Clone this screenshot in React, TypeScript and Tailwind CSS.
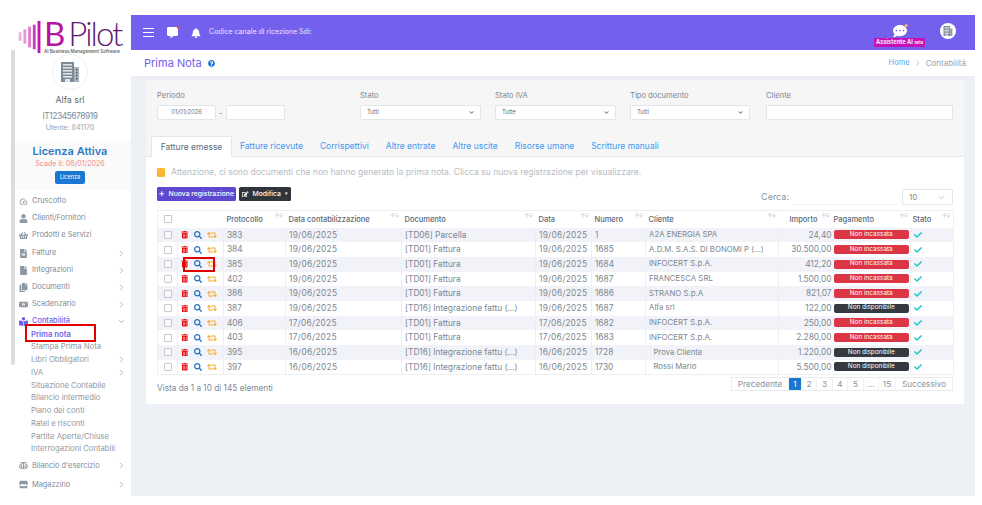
import React from "react";
import {
  FaBalanceScale, FaBookReader, FaCheck, FaChevronDown, FaCopy, FaEdit, FaFile, FaFileAlt,
  FaMoneyBillAlt, FaPlus, FaRetweet, FaSearch, FaShoppingBasket, FaStore, FaTrashAlt, FaUser, FaBell, FaCommentAlt, FaCommentDots, FaQuestionCircle,
} from "react-icons/fa";
import { FiChevronDown, FiChevronRight } from "react-icons/fi";
import { MdOutlineSpeed } from "react-icons/md";

const font = "[font-family:Inter,'Noto_Sans',sans-serif]";

type Row = [string, string, string, string, string, string, string, boolean];
const rows: Row[] = [
  ["383", "19/06/2025", "[TD06] Parcella", "19/06/2025", "1", "A2A ENERGIA SPA", "24,40", false],
  ["384", "19/06/2025", "[TD01] Fattura", "19/06/2025", "1685", "A.D.M. S.A.S. DI BONOMI P (...)", "30.500,00", false],
  ["385", "19/06/2025", "[TD01] Fattura", "19/06/2025", "1684", "INFOCERT S.p.A.", "412,20", false],
  ["402", "19/06/2025", "[TD01] Fattura", "19/06/2025", "1687", "FRANCESCA SRL", "1.500,00", false],
  ["386", "19/06/2025", "[TD01] Fattura", "19/06/2025", "1686", "STRANO S.p.A", "821,07", false],
  ["387", "19/06/2025", "[TD16] Integrazione fattu (...)", "19/06/2025", "1687", "Alfa srl", "122,00", true],
  ["406", "17/06/2025", "[TD01] Fattura", "17/06/2025", "1682", "INFOCERT S.p.A.", "250,00", false],
  ["403", "17/06/2025", "[TD01] Fattura", "17/06/2025", "1683", "INFOCERT S.p.A.", "2.280,00", false],
  ["395", "16/06/2025", "[TD16] Integrazione fattu (...)", "16/06/2025", "1728", "\u00a0\u00a0Prova Cliente", "1.220,00", true],
  ["397", "16/06/2025", "[TD16] Integrazione fattu (...)", "16/06/2025", "1730", "\u00a0\u00a0Rossi Mario", "5.500,00", true],
];

const headers: [string, string, string][] = [
  ["Protocollo", "w-[62px]", "pl-[3px]"],
  ["Data contabilizzazione", "w-[116px]", "pl-[3px]"],
  ["Documento", "w-[134px]", "pl-[3px]"],
  ["Data", "w-[56px]", "pl-[3px]"],
  ["Numero", "w-[54px]", "pl-[3px]"],
  ["Cliente", "w-[133px]", "pl-[3px]"],
  ["Importo", "w-[54px]", "pl-[11px]"],
  ["Pagamento", "w-[78px]", "pl-[1px]"],
  ["Stato", "w-[43px]", "pl-[2px]"],
];

function BuildingIcon({ className }: { className: string }) {
  return (
    <svg viewBox="0 0 24 24" className={className} fill="none">
      <rect x="3" y="2" width="13" height="20" fill="#7d8a97" />
      <rect x="16" y="7" width="5" height="15" fill="#aab3bc" />
      {[4, 7, 10, 13, 16].map((y) => (
        <rect key={y} x="5" y={y} width="9" height="1.6" fill="#dfe4e8" />
      ))}
      {[9, 12, 15, 18].map((y) => (
        <rect key={y} x="18" y={y} width="1.5" height="1.4" fill="#4e5a66" />
      ))}
      <rect x="7" y="19" width="5" height="3" fill="#dfe4e8" />
    </svg>
  );
}

function Logo() {
  const bars = [
    [0, 8, 9, "#eeb0e0"],
    [5, 5, 15, "#e695d8"],
    [10, 2, 22, "#e27ad0"],
    [15, 0, 26, "#cf3cc0"],
    [20, -4, 34, "#c014ae"],
  ] as const;
  return (
    <div className="flex items-start h-[34px]">
      <svg viewBox="0 -5 25 36" className="w-[25px] h-[34px] shrink-0">
        {bars.map(([x, y, h, c]) => (
          <rect key={x} x={x} y={y} width="3" height={h} fill={c} />
        ))}
      </svg>
      <div className="flex flex-col ml-[1px]">
        <div className="flex items-baseline leading-[26px] h-[26px] text-[33px] [font-family:Lato,sans-serif] font-light">
          <span className="text-[#b5159f] font-normal">B</span>
          <span className="text-[#5e1a72] ml-[3px] tracking-[-2px]">Pilot</span>
        </div>
        <span className={`text-[4.5px] leading-[6px] mt-[3px] text-[#6b6b6b] font-semibold whitespace-nowrap ${font}`}>AI Business Management Software</span>
      </div>
    </div>
  );
}

function NavItem({ icon, label, arrow, active, mt }: { icon: React.ReactNode; label: string; arrow?: "r" | "d"; active?: boolean; mt: string }) {
  return (
    <div className={`flex items-center pl-[3px] pr-[5px] h-[12px] ${mt}`}>
      <span className={`w-[10px] flex justify-center text-[9px] ${active ? "text-[#6f5fe8]" : "text-[#8d97a1]"}`}>{icon}</span>
      <span className={`ml-[4px] text-[7.4px] flex-1 whitespace-nowrap ${active ? "text-[#6f5fe8] font-medium" : "text-[#808b96]"}`}>{label}</span>
      {arrow === "r" && <FiChevronRight className="text-[#9aa3ab] text-[9px]" />}
      {arrow === "d" && <FiChevronDown className="text-[#9aa3ab] text-[9px]" />}
    </div>
  );
}

function SubItem({ label, arrow, active }: { label: string; arrow?: boolean; active?: boolean }) {
  return (
    <div className={`flex items-center h-[12.75px] pl-[16px] pr-[5px] text-[7.7px] whitespace-nowrap ${active ? "text-[#6f5fe8] font-semibold" : "text-[#8f99a3]"}`}>
      <span className="flex-1">{label}</span>
      {arrow && <FiChevronRight className="text-[#9aa3ab] text-[9px]" />}
    </div>
  );
}

function Sidebar() {
  return (
    <aside className="w-[120px] h-full shrink-0 flex flex-col bg-white relative">
      <div className="flex flex-1 min-h-0 mt-[35px]">
        <div className="w-[4px] h-[315px] bg-[#dcdcdc] shrink-0 rounded-b-sm" />
        <div className="flex-1 min-w-0 flex flex-col">
          <div className="h-[4px]" />
          <div className="self-center w-[36px] h-[36px] rounded-full border border-[#eef0f2] flex items-center justify-center mr-[6px]">
            <BuildingIcon className="w-[24px] h-[24px]" />
          </div>
          <div className="text-center text-[8.8px] leading-[12px] text-[#5d6873] mt-[4px] mr-[6px]">Alfa srl</div>
          <div className="text-center text-[8.5px] tracking-[-0.5px] leading-[12px] text-[#808b96] mt-[4px] mr-[6px]">IT12345678919</div>
          <div className="text-center text-[7px] leading-[10px] text-[#98a2ab] mt-[1px] mr-[6px]">Utente: 841170</div>
          <div className="bg-[#fafafa] mt-[8px] h-[49px] flex flex-col items-center pr-[6px] pt-[3px]">
            <div className="text-[11px] leading-[14px] font-semibold text-[#2c7bc4]">Licenza Attiva</div>
            <div className="text-[7.1px] leading-[11px] text-[#f08a8a]">Scade il: 08/01/2026</div>
            <div className="bg-[#1976d2] text-white text-[5.5px] rounded-[2px] px-[5px] h-[13px] flex items-center mt-[2px]">Licenza</div>
          </div>
          <NavItem mt="mt-[5px]" icon={<MdOutlineSpeed />} label="Cruscotto" />
          <NavItem mt="mt-[5px]" icon={<FaUser />} label="Clienti/Fornitori" />
          <NavItem mt="mt-[5px]" icon={<FaShoppingBasket />} label="Prodotti e Servizi" />
          <NavItem mt="mt-[6px]" icon={<FaFileAlt />} label="Fatture" arrow="r" />
          <NavItem mt="mt-[5px]" icon={<FaFile />} label="Integrazioni" arrow="r" />
          <NavItem mt="mt-[5px]" icon={<FaCopy />} label="Documenti" arrow="r" />
          <NavItem mt="mt-[5px]" icon={<FaMoneyBillAlt />} label="Scadenzario" arrow="r" />
          <NavItem mt="mt-[5px]" icon={<FaBookReader />} label="Contabilità" arrow="d" active />
          <div className="mt-[1px]">
            <SubItem label="Prima nota" active />
            <SubItem label="Stampa Prima Nota" />
            <SubItem label="Libri Obbligatori" arrow />
            <SubItem label="IVA" arrow />
            <SubItem label="Situazione Contabile" />
            <SubItem label="Bilancio intermedio" />
            <SubItem label="Piano dei conti" />
            <SubItem label="Ratei e risconti" />
            <SubItem label="Partite Aperte/Chiuse" />
            <SubItem label="Interrogazioni Contabili" />
          </div>
          <NavItem mt="mt-[4px]" icon={<FaBalanceScale />} label="Bilancio d'esercizio" arrow="r" />
          <NavItem mt="mt-[7px]" icon={<FaStore />} label="Magazzino" arrow="r" />
        </div>
      </div>
      <div className="absolute left-[7px] top-[5px] w-[112px]">
        <Logo />
      </div>
      <div className="absolute left-[14px] top-[309px] w-[71px] h-[18px] border-[2.5px] border-[#e00000]" />
    </aside>
  );
}

function Topbar() {
  return (
    <header className="h-[35px] bg-[#7360ec] flex items-center text-white pl-[12px] pr-[19px] shrink-0">
      <div className="flex flex-col gap-[2.5px] w-[11px]">
        <span className="h-[1.5px] bg-white" />
        <span className="h-[1.5px] bg-white" />
        <span className="h-[1.5px] bg-white" />
      </div>
      <span className="relative ml-[13px]">
        <FaCommentAlt className="text-[11px]" />
        <span className="absolute -top-[1px] -right-[2px] w-[3px] h-[3px] rounded-full bg-[#ef4444]" />
      </span>
      <FaBell className="text-[10px] ml-[13px]" />
      <span className="ml-[8px] text-[7.05px] text-[#e9e6fc]">Codice canale di ricezione Sdi:</span>
      <div className="ml-auto flex items-center">
        <div className="flex flex-col items-center mr-[15px] mt-[5px]">
          <span className="relative">
            <FaCommentDots className="text-[14px]" />
            <span className="absolute -top-[2px] -right-[2px] text-[7px] leading-none text-[#f6c244]">✦</span>
          </span>
          <span className="bg-[#c511b5] text-[5.8px] font-semibold leading-[8px] px-[2px] rounded-[1px] whitespace-nowrap">
            Assistente AI <span className="text-[4px]">beta</span>
          </span>
        </div>
        <div className="w-[16px] h-[16px] rounded-full bg-white flex items-center justify-center mt-[-3px]">
          <BuildingIcon className="w-[12px] h-[12px]" />
        </div>
      </div>
    </header>
  );
}

function Field({ label, width, children }: { label: string; width: string; children: React.ReactNode }) {
  return (
    <div className={`${width} shrink-0`}>
      <div className="text-[7.6px] leading-[10px] text-[#7d8790]">{label}</div>
      <div className="mt-[4px]">{children}</div>
    </div>
  );
}

function Box({ className, children }: { className: string; children?: React.ReactNode }) {
  return <div className={`h-[15px] bg-white border border-[#e3e6e9] rounded-[2px] flex items-center text-[5.8px] text-[#66707a] ${className}`}>{children}</div>;
}

function Filters() {
  return (
    <div className="bg-[#f6f6f6] h-[56px] flex pl-[11px] pt-[11px] shrink-0">
      <Field label="Periodo" width="w-[203px]">
        <div className="flex items-center gap-[3px]">
          <Box className="w-[59px] justify-center">01/01/2026</Box>
          <span className="text-[8px] text-[#888]">-</span>
          <Box className="w-[59px]" />
        </div>
      </Field>
      <Field label="Stato" width="w-[135px]">
        <Box className="w-[121px] justify-between px-[6px]">Tutti<FaChevronDown className="text-[5px]" /></Box>
      </Field>
      <Field label="Stato IVA" width="w-[135px]">
        <Box className="w-[121px] justify-between px-[6px]">Tutte<FaChevronDown className="text-[5px]" /></Box>
      </Field>
      <Field label="Tipo documento" width="w-[136px]">
        <Box className="w-[120px] justify-between px-[6px]">Tutti<FaChevronDown className="text-[5px]" /></Box>
      </Field>
      <Field label="Cliente" width="w-[187px]">
        <Box className="w-[187px]" />
      </Field>
    </div>
  );
}

function Tabs() {
  const tabs = ["Fatture ricevute", "Corrispettivi", "Altre entrate", "Altre uscite", "Risorse umane", "Scritture manuali"];
  return (
    <div className="flex items-end h-[21px] bg-[#f6f6f6] border-b border-[#e4e6e8] pl-[5px] shrink-0 text-[8.5px]">
      <div className="h-[21px] -mb-[1px] w-[81px] bg-white border border-b-0 border-[#e4e6e8] rounded-t-[2px] flex items-center justify-center text-[#5f6a75]">Fatture emesse</div>
      <div className="flex gap-[17px] h-[20px] items-center ml-[8px] text-[#3f98f4]">
        {tabs.map((t) => (
          <span key={t}>{t}</span>
        ))}
      </div>
    </div>
  );
}

function Table() {
  const date = "pl-[3px] border-l border-[#eeeff1] tracking-[0.3px]";
  const cell = "pl-[3px] border-l border-[#eeeff1]";
  return (
    <table className="table-fixed w-[796px] border-collapse border border-[#eeeff1] text-[8.3px] text-[#7c8791]">
      <thead>
        <tr className="h-[17px] text-[7.5px] text-[#5d6873]">
          <th className="w-[20px] pl-[6px]">
            <span className="block w-[8px] h-[8px] border border-[#c5c9cd] rounded-[1px] bg-white" />
          </th>
          <th className="w-[46px]" />
          {headers.map(([h, w, pad]) => (
            <th key={h} className={`${w} ${pad} font-medium text-left relative whitespace-nowrap`}>
              {h}
              <span className="absolute right-[3px] top-[2px] text-[6px] tracking-[-1px] leading-none text-[#ccd0d4]">↑↓</span>
            </th>
          ))}
        </tr>
      </thead>
      <tbody>
        {rows.map((r, i) => (
          <tr key={r[0]} className={`h-[14.7px] ${i % 2 === 0 ? "bg-[#f2f3f8]" : "bg-white"}`}>
            <td className="pl-[6px]">
              <span className="block w-[8px] h-[8px] border border-[#c5c9cd] rounded-[1px] bg-white/60" />
            </td>
            <td className="border-l border-[#eeeff1]">
              <div className="flex items-center gap-[5px] pl-[3px] text-[8px]">
                <FaTrashAlt className="text-[#ec0b0b] text-[7.5px]" />
                <FaSearch className="text-[#1a6fc9]" />
                <FaRetweet className="text-[#f7ab33] text-[10px]" />
              </div>
            </td>
            <td className={cell}>{r[0]}</td>
            <td className={date}>{r[1]}</td>
            <td className={`${cell} whitespace-nowrap overflow-hidden`}>{r[2]}</td>
            <td className={date}>{r[3]}</td>
            <td className={cell}>{r[4]}</td>
            <td className={`${cell} whitespace-nowrap overflow-hidden text-[7.8px]`}>{r[5]}</td>
            <td className="pr-[1px] text-right border-l border-[#eeeff1]">{r[6]}</td>
            <td className="px-[1px]">
              <div className={`h-[9px] rounded-[2px] flex items-center justify-center text-[6.4px] text-white ${r[7] ? "bg-[#343a40]" : "bg-[#dc3545]"}`}>
                {r[7] ? "Non disponibile" : "Non incassata"}
              </div>
            </td>
            <td className="pl-[3px] border-l border-[#eeeff1]">
              <FaCheck className="text-[#22c7c9] text-[8px]" />
            </td>
          </tr>
        ))}
      </tbody>
    </table>
  );
}

function Pagination() {
  const pages = [
    ["Precedente", "w-[57px]"], ["1", "w-[13px]"], ["2", "w-[15px]"], ["3", "w-[16px]"], ["4", "w-[15px]"], ["5", "w-[16px]"], ["...", "w-[15px]"], ["15", "w-[17px]"], ["Successivo", "w-[56px]"],
  ];
  return (
    <div className="flex h-[14px] border border-[#e9ebed] text-[8.2px] text-[#8a949d]">
      {pages.map(([p, w]) => (
        <span key={p} className={`${w} flex items-center justify-center border-r border-[#f0f1f3] last:border-r-0 ${p === "1" ? "bg-[#1976d2] text-white" : ""}`}>{p}</span>
      ))}
    </div>
  );
}

export default function App() {
  return (
    <div className={`w-[982px] h-[505px] bg-white pt-[15px] pl-[11px] pr-[7px] pb-[9px] flex overflow-hidden ${font}`}>
      <Sidebar />
      <div className="flex-1 min-w-0 flex flex-col">
        <Topbar />
        <div className="h-[27px] bg-white flex items-center pl-[13px] pr-[9px] border-b border-[#e8ecf0] shrink-0">
          <span className="text-[11px] text-[#7360ec]">Prima Nota</span>
          <FaQuestionCircle className="text-[#1976d2] text-[7px] ml-[6px]" />
          <span className="ml-auto text-[7.5px] text-[#52a6f5]">Home</span>
          <FiChevronRight className="text-[#a9b1b8] text-[8px] mx-[4px]" />
          <span className="text-[8px] text-[#9aa3ab]">Contabilità</span>
        </div>
        <main className="flex-1 min-h-0 bg-[#edf1f5] pt-[3px] pl-[15px] pr-[11px]">
          <section className="bg-white h-[324px] flex flex-col rounded-[2px] relative">
            <Filters />
            <Tabs />
            <div className="flex-1 px-[11px]">
              <div className="flex items-center h-[30px]">
                <span className="w-[8px] h-[9px] rounded-[1.5px] bg-[#fdb62f]" />
                <span className="ml-[6px] text-[8.55px] text-[#b6bcc2] whitespace-nowrap">Attenzione, ci sono documenti che non hanno generato la prima nota. Clicca su nuova registrazione per visualizzare.</span>
              </div>
              <div className="flex items-start h-[18px]">
                <div className="h-[14px] w-[79px] bg-[#5e48d0] rounded-[1.5px] flex items-center justify-center gap-[4px] text-white text-[6.8px] font-medium whitespace-nowrap">
                  <FaPlus className="text-[5.5px]" />Nuova registrazione
                </div>
                <div className="h-[14px] w-[52px] bg-[#2f353b] rounded-[1.5px] ml-[3px] flex items-center justify-center gap-[4px] text-white text-[6.8px] font-medium">
                  <FaEdit className="text-[6.5px]" />Modifica <span className="text-[5px]">▾</span>
                </div>
                <div className="ml-auto flex items-center mt-[2px]">
                  <span className="text-[9px] text-[#8a949d]">Cerca:</span>
                  <span className="w-[105px] h-[16px] ml-[3px] border-b border-[#f2f3f4]" />
                  <div className="w-[51px] h-[16px] ml-[5px] border border-[#e3e6e9] rounded-[2px] flex items-center justify-between px-[6px] text-[8px] text-[#7c8791]">
                    10<FiChevronDown className="text-[#a9b1b8] text-[9px]" />
                  </div>
                </div>
              </div>
              <div className="mt-[5px]">
                <Table />
              </div>
              <div className="flex items-start justify-between mt-[2px]">
                <span className="text-[8.25px] text-[#808b96] mt-[5px]">Vista da 1 a 10 di 145 elementi</span>
                <Pagination />
              </div>
            </div>
            <div className="absolute left-[37px] top-[177px] w-[32px] h-[15px] border-[2.5px] border-[#e00000]" />
          </section>
        </main>
      </div>
    </div>
  );
}
